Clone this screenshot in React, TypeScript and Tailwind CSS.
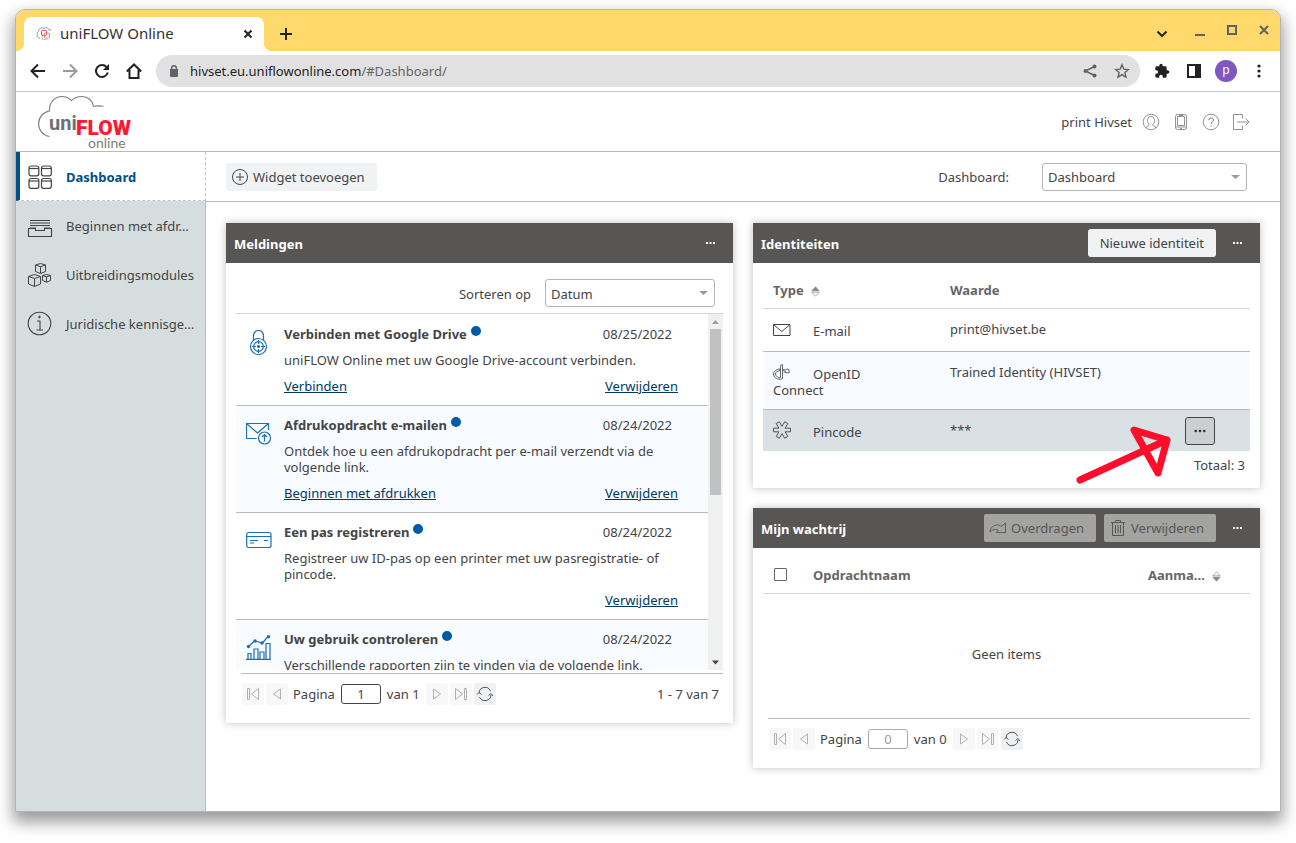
import type { ReactNode } from "react";

const TEXT = "font-['Noto_Sans',sans-serif] text-[13px] leading-4 text-[#444]";

function Svg({ w, h = w, className = "", sw = 1, children }: { w: number; h?: number; className?: string; sw?: number; children: ReactNode }) {
  return (
    <svg width={w} height={h} viewBox={`0 0 ${w} ${h}`} fill="none" stroke="currentColor" strokeWidth={sw} className={`shrink-0 ${className}`} aria-hidden="true">
      {children}
    </svg>
  );
}

/* ---------- browser chrome ---------- */

function TabStrip() {
  return (
    <div className="flex h-[41px] items-end justify-between rounded-t-[9px] bg-[#ffd96c] pr-[10px] pl-2">
      <div className="flex items-end">
        <div className="relative flex h-[34px] w-60 items-center rounded-t-lg bg-white pr-2 pl-3 before:absolute before:bottom-0 before:-left-2 before:size-2 before:bg-[radial-gradient(circle_at_0_0,#ffd96c_8px,#fff_8px)] after:absolute after:-right-2 after:bottom-0 after:size-2 after:bg-[radial-gradient(circle_at_100%_0,#ffd96c_8px,#fff_8px)]">
          <Svg w={16} className="text-[#9a9a9a]">
            <path d="M4 12.500A4 4 0 0 1 2.500 5.500 3.500 3.500 0 0 1 8 2.500a3 3 0 0 1 5 1.500h2.500" />
            <rect x="5.500" y="4.500" width="5" height="5" rx="1" stroke="#e8384f" />
            <rect x="8.500" y="7" width="5" height="5" rx="1" stroke="#d88" />
            <path d="M6.500 10v3.500h5" stroke="#c9c9c9" />
          </Svg>
          <span className="ml-2 flex-1 pb-[2px] text-[15px] text-[#333]">uniFLOW Online</span>
          <button aria-label="Tab sluiten" className="flex size-4 items-center justify-center text-[#222]">
            <Svg w={10} sw={2}><path d="M1.500 1.500l7 7M8.500 1.500l-7 7" /></Svg>
          </button>
        </div>
        <button aria-label="Nieuw tabblad" className="mb-[11px] ml-4 text-[#222]">
          <Svg w={12} sw={2}><path d="M6 0v12M0 6h12" /></Svg>
        </button>
      </div>
      <div className="mb-3 flex items-center gap-5 text-[#5f6368]">
        <button aria-label="Tabbladen zoeken" className="mr-[6px] mt-2 text-[#222]"><Svg w={12} h={10} sw={2}><path d="M1.500 2.500L6 7l4.500-4.500" /></Svg></button>
        <button aria-label="Minimaliseren"><Svg w={12} sw={2}><path d="M1 11h10" /></Svg></button>
        <button aria-label="Maximaliseren"><Svg w={12} sw={2}><rect x="2" y="2" width="8" height="8" /></Svg></button>
        <button aria-label="Sluiten"><Svg w={12} sw={2}><path d="M2 2l8 8M10 2l-8 8" /></Svg></button>
      </div>
    </div>
  );
}

function AddressBar() {
  return (
    <div className="flex h-[41px] items-center border-b border-[#c4c4c4] bg-white pr-[13px] pl-[14px] text-[#222]">
      <div className="flex gap-4">
        <button aria-label="Terug"><Svg w={16} sw={2}><path d="M15 8H2M8 1.500L1.500 8 8 14.500" /></Svg></button>
        <button aria-label="Vooruit" className="text-[#9b9b9b]"><Svg w={16} sw={2}><path d="M1 8h13M8 1.500L14.500 8 8 14.500" /></Svg></button>
        <button aria-label="Vernieuwen"><Svg w={16} sw={2}><path d="M13.800 9.500A6 6 0 1 1 12.500 4" /><path d="M15 1v6H9z" fill="currentColor" stroke="none" /></Svg></button>
        <button aria-label="Startpagina"><Svg w={16} sw={2}><path d="M3.500 7v8h9V7M0.800 8.500L8 1.500l7.200 7" /></Svg></button>
      </div>
      <div className="ml-[14px] flex h-8 flex-1 items-center rounded-full bg-[#e1e1e1] pr-[10px] pl-[14px] text-[#5f6368]">
        <svg width="8" height="12" viewBox="0 0 8 12" aria-hidden="true"><path d="M0 4h8v7a1 1 0 0 1-1 1H1a1 1 0 0 1-1-1z" fill="#5f6368" /><path d="M1.700 4.500V3a2.300 2.300 0 0 1 4.600 0v1.500" fill="none" stroke="#5f6368" strokeWidth="1.400" /></svg>
        <div role="textbox" tabIndex={0} aria-label="Adres" className="ml-3 flex-1 text-[#666]"><span className="text-[#222]">hivset.eu.uniflowonline.com</span>/#Dashboard/</div>
        <button aria-label="Delen"><Svg w={16} sw={1}><path d="M12.500 3.500L3.500 8l9 4.500" strokeWidth="1.500" /><g fill="currentColor" stroke="none"><circle cx="12.500" cy="3.500" r="2" /><circle cx="3.500" cy="8" r="2" /><circle cx="12.500" cy="12.500" r="2" /></g></Svg></button>
        <button aria-label="Bladwijzer" className="ml-4"><Svg w={16} sw={1.4}><path d="M8 1.800l1.800 4.300 4.600.4-3.500 3.100 1.100 4.600L8 11.700l-4 2.500 1.100-4.600L1.600 6.500l4.600-.4z" /></Svg></button>
      </div>
      <div className="ml-[14px] flex items-center">
        <button aria-label="Extensies"><svg width="16" height="16" viewBox="0 0 24 24" fill="currentColor" aria-hidden="true"><path d="M20.500 11H19V7a2 2 0 0 0-2-2h-4V3.500a2.500 2.500 0 0 0-5 0V5H4a2 2 0 0 0-2 2v3.800h1.500a2.700 2.700 0 0 1 0 5.400H2V20a2 2 0 0 0 2 2h3.800v-1.500a2.700 2.700 0 0 1 5.400 0V22H17a2 2 0 0 0 2-2v-4h1.500a2.500 2.500 0 0 0 0-5z" /></svg></button>
        <button aria-label="Zijpaneel" className="ml-4"><Svg w={16} sw={2}><path d="M2 2h12v12H2z" /><path d="M9 2h5v12H9z" fill="currentColor" stroke="none" /></Svg></button>
        <button aria-label="Profiel" className="ml-[13px] flex size-[22px] items-center justify-center rounded-full bg-[#7e57c2] pb-[2px] text-[12px] text-white">p</button>
        <button aria-label="Meer" className="ml-[14px]"><svg width="16" height="16" viewBox="0 0 16 16" fill="currentColor" aria-hidden="true"><circle cx="8" cy="3" r="1.600" /><circle cx="8" cy="8" r="1.600" /><circle cx="8" cy="13" r="1.600" /></svg></button>
      </div>
    </div>
  );
}

/* ---------- application header ---------- */

function Logo() {
  return (
    <svg width="100" height="56" viewBox="0 0 100 56" role="img" aria-label="uniFLOW online">
      <path d="M14.500 42.500A12.900 12.900 0 0 1 14.500 17c-.5-9.500 6-14.500 12.500-14.500 4 0 7 1.500 9.300 4.200C39 4 43 2.500 47 2.500c6 0 10.500 4 11.500 9.800 3-.6 6-.6 10 0" fill="none" stroke="#7d7d7d" strokeWidth="1.100" />
      <text x="14" y="36" fontFamily="Roboto, sans-serif" fontWeight="bold" fontSize="20" fill="#6f7072">uni</text>
      <text x="41" y="41" fontFamily="Roboto, sans-serif" fontWeight="900" fontSize="21" fill="#fb1a33">FLOW</text>
      <text x="53" y="54" fontFamily="Lato, sans-serif" fontSize="14" fill="#7d7d7d">online</text>
    </svg>
  );
}

function AppHeader() {
  return (
    <header className="flex h-[60px] items-center justify-between border-b border-[#bbb] pr-[30px] pl-[19px]">
      <Logo />
      <div className="flex items-center text-[#777]">
        <span className="mr-[10px] text-[#444]">print Hivset</span>
        <div className="flex gap-3">
          <button aria-label="Account"><Svg w={18}><circle cx="9" cy="9" r="7.800" strokeWidth=".8" /><path d="M4 15c0-2 3.500-1.800 3.500-3.200C6 10.500 5.500 9 5.500 7.500 5.500 5 7 3.500 9 3.500s3.500 1.500 3.500 4c0 1.500-.5 3-2 4.300 0 1.400 3.500 1.200 3.500 3.200" strokeWidth=".8" /></Svg></button>
          <button aria-label="Mobiel"><Svg w={18}><rect x="3.500" y="1.500" width="11" height="15" rx="2" strokeWidth=".8" /><path d="M5.500 3.500h7v9h-7zM7 2.500h4M4 14h10M8 15.500h2" strokeWidth=".8" /></Svg></button>
          <button aria-label="Help"><Svg w={18}><circle cx="9" cy="9" r="7.800" strokeWidth=".8" /><path d="M6.800 7.200c0-3 4.600-3 4.600-.2C11.400 9 9 8.800 9 11M9 12.500v1" strokeWidth="1" /></Svg></button>
          <button aria-label="Afmelden"><Svg w={18}><path d="M10.500 5.500V1.500h-9v15h9v-4M5 9h12M13.500 5.500L17 9l-3.500 3.500" strokeWidth=".8" /></Svg></button>
        </div>
      </div>
    </header>
  );
}

/* ---------- sidebar ---------- */

const NAV: { label: string; icon: ReactNode }[] = [
  {
    label: "Beginnen met afdr…",
    icon: <Svg w={26}><path d="M1.500 15.500v8h23v-8h-7v2h-9v-2zM3 7.500h20M3 10h20M3 12.500h20M3 15h6M17 15h6" strokeWidth="1.100" /></Svg>,
  },
  {
    label: "Uitbreidingsmodules",
    icon: <Svg w={26}><path d="M8.500 3l5-1.500 5 1.500v6.500l-5 2-5-2zM8.500 3l5 1.700 5-1.700M13.500 4.700v6.500M1.500 14.500l6-2 6 2v7.500l-6 2.500-6-2.500zM1.500 14.500l6 2 6-2M7.500 16.500v8M15.500 13.500l4-1 4 1v5l-4 1.700-4-1.700zM15.500 13.500l4 1.300 4-1.300M19.500 14.800v5.400" /></Svg>,
  },
  {
    label: "Juridische kennisge…",
    icon: <Svg w={26}><circle cx="12.500" cy="12.500" r="11.300" strokeWidth="1.100" /><path d="M10 10h3v9M9.500 19H16" strokeWidth="1.100" /><circle cx="12.500" cy="6" r=".8" fill="currentColor" /></Svg>,
  },
];

function Sidebar() {
  return (
    <nav className="w-[190px] shrink-0 border-r border-[#bbb] bg-[#d5dddf]">
      <a href="#Dashboard" className="-mr-px flex h-[49px] items-center border-r border-b border-l-4 border-dashed border-[#c4c4c4] border-l-[#004f86] bg-white pt-px pl-2 font-bold text-[#004f86] [border-left-style:solid]">
        <Svg w={24} className="text-[#444]" sw={1.2}>
          {[[1, 1], [13.5, 1], [1, 13.5], [13.5, 13.5]].map(([x, y]) => (
            <g key={`${x}-${y}`}><rect x={x} y={y} width="9.800" height="9.800" rx="2" /><path d={`M${x} ${y + 2.5}h9.800`} /></g>
          ))}
        </Svg>
        <span className="ml-[14px]">Dashboard</span>
      </a>
      {NAV.map((n) => (
        <a key={n.label} href="#nav" className="flex h-[49px] items-center gap-[13px] pl-[11px]">
          {n.icon}
          <span className="whitespace-nowrap">{n.label}</span>
        </a>
      ))}
    </nav>
  );
}

/* ---------- shared widgets ---------- */

function Select({ id, value, className }: { id: string; value: string; className: string }) {
  return (
    <div className={`relative ${className}`}>
      <select id={id} className="block h-7 w-full appearance-none rounded-[3px] border border-[#b5b5b5] bg-white pt-px pl-[5px]">
        <option>{value}</option>
      </select>
      <svg width="9" height="4" viewBox="0 0 9 4" className="pointer-events-none absolute top-3 right-[7px]" aria-hidden="true"><path d="M0 0h9L4.500 4z" fill="#999" /></svg>
    </div>
  );
}

function MoreButton() {
  return (
    <button aria-label="Meer opties" className="flex h-7 w-[27px] items-center justify-center text-white">
      <svg width="10" height="2" viewBox="0 0 10 2" fill="currentColor" aria-hidden="true"><path d="M0 0h2v2H0zM3.500 0h2v2h-2zM7 0h2v2H7z" /></svg>
    </button>
  );
}

function Card({ title, actions, children }: { title: string; actions?: ReactNode; children: ReactNode }) {
  return (
    <section className="bg-white shadow-[0_0_8px_rgba(0,0,0,0.25)]">
      <div className="flex h-10 items-center justify-between bg-[#575655] pr-[9px] pl-2">
        <h2 className="pt-[2px] font-bold text-white">{title}</h2>
        <div className="flex items-center gap-2">{actions}<MoreButton /></div>
      </div>
      {children}
    </section>
  );
}

const FIRST = <Svg w={16}><path d="M2.500 2.500h2v11h-2zM13.500 2.500v11L6.500 8z" /></Svg>;
const PREV = <Svg w={16}><path d="M11.500 3v10L4.500 8z" /></Svg>;
const NEXT = <Svg w={16}><path d="M4.500 3v10l7-5z" /></Svg>;
const LAST = <Svg w={16}><path d="M11.500 2.500h2v11h-2zM2.500 2.500v11L9.500 8z" /></Svg>;
const REFRESH = <Svg w={18}><path d="M3 8a6 6 0 0 1 11.500-2M15 10A6 6 0 0 1 3.500 12M1 9.500L3 7.500l2.500 2M12.500 10.500L15 8.500l2 2.500" /></Svg>;

function PageButton({ label, on = false, children }: { label: string; on?: boolean; children: ReactNode }) {
  return (
    <button aria-label={label} disabled={!on} className={on ? "flex size-[22px] items-center justify-center rounded-[2px] bg-[#f0f1f3] text-[#555]" : "flex size-[22px] items-center justify-center rounded-[2px] bg-[#f8f8f8] text-[#b0b0b0]"}>
      {children}
    </button>
  );
}

function Pager({ id, page, summary }: { id: string; page: string; summary?: string }) {
  const off = page === "0";
  return (
    <div className="flex h-10 items-center px-px">
      <div className="flex gap-[2px]"><PageButton label="Eerste pagina">{FIRST}</PageButton><PageButton label="Vorige pagina">{PREV}</PageButton></div>
      <label htmlFor={id} className="mr-[6px] ml-[5px]">Pagina</label>
      <input id={id} defaultValue={page} disabled={off} className={off ? "h-5 w-10 rounded-[3px] border border-[#aaa] bg-white text-center text-[#999]" : "h-5 w-10 rounded-[3px] border border-[#444] bg-white text-center"} />
      <span className="mx-[6px]">van {page}</span>
      <div className="flex gap-[2px]"><PageButton label="Volgende pagina">{NEXT}</PageButton><PageButton label="Laatste pagina">{LAST}</PageButton><PageButton label="Vernieuwen" on>{REFRESH}</PageButton></div>
      {summary && <span className="ml-auto pr-[3px]">{summary}</span>}
    </div>
  );
}

/* ---------- messages ---------- */

interface Message { title: string; date: string; text: string; link?: string; removable: boolean; icon: ReactNode }

const MESSAGES: Message[] = [
  {
    title: "Verbinden met Google Drive", date: "08/25/2022", text: "uniFLOW Online met uw Google Drive-account verbinden.", link: "Verbinden", removable: true,
    icon: <Svg w={26} sw={1.2}><path d="M7.500 10V5.500a5 5 0 0 1 10 0V10" /><circle cx="12.500" cy="16.500" r="8" /><circle cx="12.500" cy="16.500" r="4.800" /><circle cx="12.500" cy="16.500" r="1" fill="currentColor" /><path d="M12.500 10v4M12.500 19v4M6 16.500h4M15 16.500h4" /></Svg>,
  },
  {
    title: "Afdrukopdracht e-mailen", date: "08/24/2022", text: "Ontdek hoe u een afdrukopdracht per e-mail verzendt via de volgende link.", link: "Beginnen met afdrukken", removable: true,
    icon: <Svg w={26} sw={1.2}><path d="M10.500 17.500H1.500a1 1 0 0 1-1-1V2.500h22V9M.5 2.500l11 9.500 11-9.500" /><circle cx="18.500" cy="17" r="6" /><path d="M18.500 20.500v-7M16 16l2.500-2.500L21 16" /></Svg>,
  },
  {
    title: "Een pas registreren", date: "08/24/2022", text: "Registreer uw ID-pas op een printer met uw pasregistratie- of pincode.", removable: true,
    icon: <Svg w={26} sw={1.2}><rect x=".7" y="4.500" width="24.300" height="15" rx="2" /><path d="M.7 8.500H25M4 12.500h8M4 15h4M18 12.500h4" /></Svg>,
  },
  {
    title: "Uw gebruik controleren", date: "08/24/2022", text: "Verschillende rapporten zijn te vinden via de volgende link.", removable: false,
    icon: <Svg w={26} sw={1.2}><path d="M0 24.400h25M2 24v-5.500h3V24M8 24V14h4v10M14 24v-7h4v7M20 24V8.500h4V24M2.500 11.500L8.500 6l8 2L22 1.500" /><g fill="currentColor" stroke="none"><circle cx="2.500" cy="11.500" r="1.700" /><circle cx="9" cy="6" r="1.700" /><circle cx="16" cy="8" r="1.700" /><circle cx="22.500" cy="1.700" r="1.700" /></g></Svg>,
  },
];

function MessagesCard() {
  return (
    <Card title="Meldingen">
      <div className="px-[10px] pb-[9px]">
        <div className="flex h-[51px] items-center justify-end border-b border-[#d5d5d5] pt-[10px] pr-2">
          <label htmlFor="sort" className="mt-[2px] mr-[14px]">Sorteren op</label>
          <Select id="sort" value="Datum" className="w-[170px]" />
        </div>
        <div className="flex h-[356px]">
          <ul className="flex-1 overflow-hidden pt-px">
            {MESSAGES.map((m) => (
              <li key={m.title} className="flex border-b border-[#bbb] py-[11px] pr-[30px] pl-[10px] even:bg-[#f8fbff]">
                <span className="-my-1 mr-3 pt-2 text-[#1a6fb5]">{m.icon}</span>
                <div className="flex min-w-0 flex-1 flex-col gap-[10px]">
                  <div className="flex h-4 justify-between pr-[6px]">
                    <h3 className="flex font-bold">{m.title}<span className="ml-1 size-[10px] rounded-full bg-[#005ba6]" /></h3>
                    <span>{m.date}</span>
                  </div>
                  <p>{m.text}</p>
                  {m.removable && (
                    <div className="flex justify-between text-[#003a61] underline">
                      {m.link ? <a href="#link">{m.link}</a> : <span />}
                      <a href="#remove">Verwijderen</a>
                    </div>
                  )}
                </div>
              </li>
            ))}
          </ul>
          <div className="flex w-[15px] flex-col items-center justify-between bg-[#f0f0f0]" aria-hidden="true">
            <svg width="15" height="15" viewBox="0 0 15 15"><path d="M4 10h7L7.500 6z" fill="#a0a0a0" /></svg>
            <span className="mb-auto h-[166px] w-[11px] bg-[#c1c1c1]" />
            <svg width="15" height="15" viewBox="0 0 15 15"><path d="M4 5.500h7l-3.500 4z" fill="#444" /></svg>
          </div>
        </div>
        <div className="mt-[3px] ml-[5px] border-t border-[#bbb]"><Pager id="page-messages" page="1" summary="1 - 7 van 7" /></div>
      </div>
    </Card>
  );
}

/* ---------- identities ---------- */

function SortIcon({ up }: { up: boolean }) {
  return (
    <svg width="9" height="11" viewBox="0 0 9 11" className="inline-block align-[-2px]" stroke="#888" strokeWidth=".7" aria-hidden="true">
      <path d="M.8 4.800h7.400L4.500.8z" fill={up ? "#888" : "none"} /><path d="M.8 6.200h7.400l-3.700 4z" fill={up ? "none" : "#888"} />
    </svg>
  );
}

const IDENTITIES: { type: string; value: string; row: string; icon: ReactNode }[] = [
  { type: "E-mail", value: "print@hivset.be", row: "h-[43px] border-b border-[#bbb]", icon: <path d="M.5 4.500h16.500v11H.5zM1 5l7.800 6.500L16.500 5" /> },
  { type: "OpenID Connect", value: "Trained Identity (HIVSET)", row: "h-[58px] border-b border-[#bbb] bg-[#f8fbff]", icon: <path d="M7.500 2.500l2-1v14l-2 1C3 16 .5 14 .5 11 .5 8.500 3 6.500 7 6v1.500C4 8 2.500 9.200 2.500 11s1.500 3.300 5 4zM9.500 6l3 1 1.500-1 2 .5V10l-4.500-.7 1-1-3-.8" strokeWidth=".8" /> },
  { type: "Pincode", value: "***", row: "h-[42px] bg-[#d9e1e4]", icon: <path d="M12.120 7.200H17.500v3.600h-5.380l2.690 4.660-3.120 1.800L9 12.600l-2.690 4.660-3.120-1.800 2.690-4.660H.5V7.200h5.380L3.190 2.540 6.310.74 9 5.400 11.690.74l3.120 1.800z" strokeWidth=".9" /> },
];

function IdentitiesCard() {
  return (
    <Card title="Identiteiten" actions={<button className="h-7 rounded-[3px] bg-[#f0f2f4] px-3">Nieuwe identiteit</button>}>
      <div className="px-[10px] pb-[15px]">
        <table className="w-full table-fixed text-left">
          <thead>
            <tr className="h-[45px] border-b border-[#d5d5d5] text-[#666]">
              <th className="w-[177px] pt-[10px] pl-[10px]">Type <span className="ml-1"><SortIcon up /></span></th>
              <th className="pt-[10px] pl-[10px]">Waarde</th>
              <th className="w-[65px]" aria-label="Acties" />
            </tr>
          </thead>
          <tbody>
            {IDENTITIES.map((r) => (
              <tr key={r.type} className={r.row}>
                <td className="pt-[14px] pr-10 pl-[10px] align-top">
                  <Svg w={18} className="-my-1 mr-[22px] inline-block align-[2px]">{r.icon}</Svg>{r.type}
                </td>
                <td className="pt-3 pl-[10px] align-top">{r.value}</td>
                <td className="relative pt-px">
                  {r.value === "***" && (
                    <>
                      <button aria-label="Acties voor pincode" className="flex h-7 w-[30px] items-center justify-center rounded-[3px] border border-[#444] bg-[#cbcfd0]">
                        <svg width="12" height="4" viewBox="0 0 12 4" fill="#333" aria-hidden="true"><circle cx="1.700" cy="2" r="1.300" /><circle cx="6" cy="2" r="1.300" /><circle cx="10.300" cy="2" r="1.300" /></svg>
                      </button>
                      <svg width="104" height="64" viewBox="0 0 104 64" className="pointer-events-none absolute top-[13px] right-[70px]" fill="none" stroke="#ff0d2b" strokeWidth="7" strokeLinecap="round" strokeLinejoin="round" aria-hidden="true">
                        <path d="M4 57L91 17M58 7l33 10-9 33z" />
                      </svg>
                    </>
                  )}
                </td>
              </tr>
            ))}
          </tbody>
        </table>
        <p className="pt-[6px] pr-[5px] text-right">Totaal: 3</p>
      </div>
    </Card>
  );
}

/* ---------- print queue ---------- */

function QueueCard() {
  return (
    <Card
      title="Mijn wachtrij"
      actions={
        <>
          <button disabled className="flex h-7 items-center gap-1 rounded-[2px] bg-[#a3a3a1] pr-3 pl-[5px] text-[#575655]">
            <Svg w={18}><path d="M1 13C1 8.500 5 5.500 10.500 6L12 7.500 16.500 4v9.500H7l2.500-2C6.500 9.500 3.500 10.500 1 13z" strokeWidth=".9" /></Svg>
            Overdragen
          </button>
          <button disabled className="flex h-7 items-center gap-1 rounded-[2px] bg-[#a3a3a1] pr-3 pl-[5px] text-[#575655]">
            <Svg w={18}><path d="M2 3.500h14M6.500 3.500V1.500h5v2M3.500 3.500v13h11v-13M6.500 6v8M9 6v8M11.500 6v8" /></Svg>
            Verwijderen
          </button>
        </>
      }
    >
      <div className="px-[10px] pb-[9px]">
        <table className="w-full table-fixed text-left">
          <thead>
            <tr className="h-[45px] border-b border-[#d5d5d5] text-[#666]">
              <th className="w-[50px] pt-2 pl-[11px]"><input type="checkbox" aria-label="Alles selecteren" className="block size-[13px] appearance-none rounded-[1px] border border-[#666] bg-white" /></th>
              <th className="pt-[10px]">Opdrachtnaam</th>
              <th className="w-[102px] pt-[10px]">Aanma… <span className="ml-1"><SortIcon up={false} /></span></th>
            </tr>
          </thead>
          <tbody>
            <tr><td colSpan={3} className="h-[125px] pb-1 text-center">Geen items</td></tr>
          </tbody>
        </table>
        <div className="ml-[5px] border-t border-[#bbb]"><Pager id="page-queue" page="0" /></div>
      </div>
    </Card>
  );
}

export default function App() {
  return (
    <div className={`flex min-h-screen flex-col bg-white px-[15px] pt-[9px] pb-[31px] ${TEXT}`}>
      <div className="flex flex-1 flex-col rounded-t-[10px] border border-[#b5b5b5] bg-white shadow-[0_8px_16px_2px_rgba(0,0,0,0.4)]">
        <TabStrip />
        <AddressBar />
        <AppHeader />
        <div className="flex flex-1">
          <Sidebar />
          <main className="min-w-0 flex-1">
            <div className="flex h-[50px] items-center justify-between border-b border-[#bbb] pr-[33px] pl-5">
              <button className="flex h-7 items-center gap-1 rounded-[3px] bg-[#f0f2f4] pr-3 pl-[5px]">
                <Svg w={18}><circle cx="9" cy="9" r="7.500" /><path d="M9 5v8M5 9h8" /></Svg>
                Widget toevoegen
              </button>
              <div className="flex items-center">
                <label htmlFor="dash" className="mr-[33px]">Dashboard:</label>
                <Select id="dash" value="Dashboard" className="w-[205px]" />
              </div>
            </div>
            <div className="grid grid-cols-2 items-start gap-5 px-5 pt-[21px] pb-5">
              <MessagesCard />
              <div className="flex flex-col gap-5"><IdentitiesCard /><QueueCard /></div>
            </div>
          </main>
        </div>
      </div>
    </div>
  );
}
